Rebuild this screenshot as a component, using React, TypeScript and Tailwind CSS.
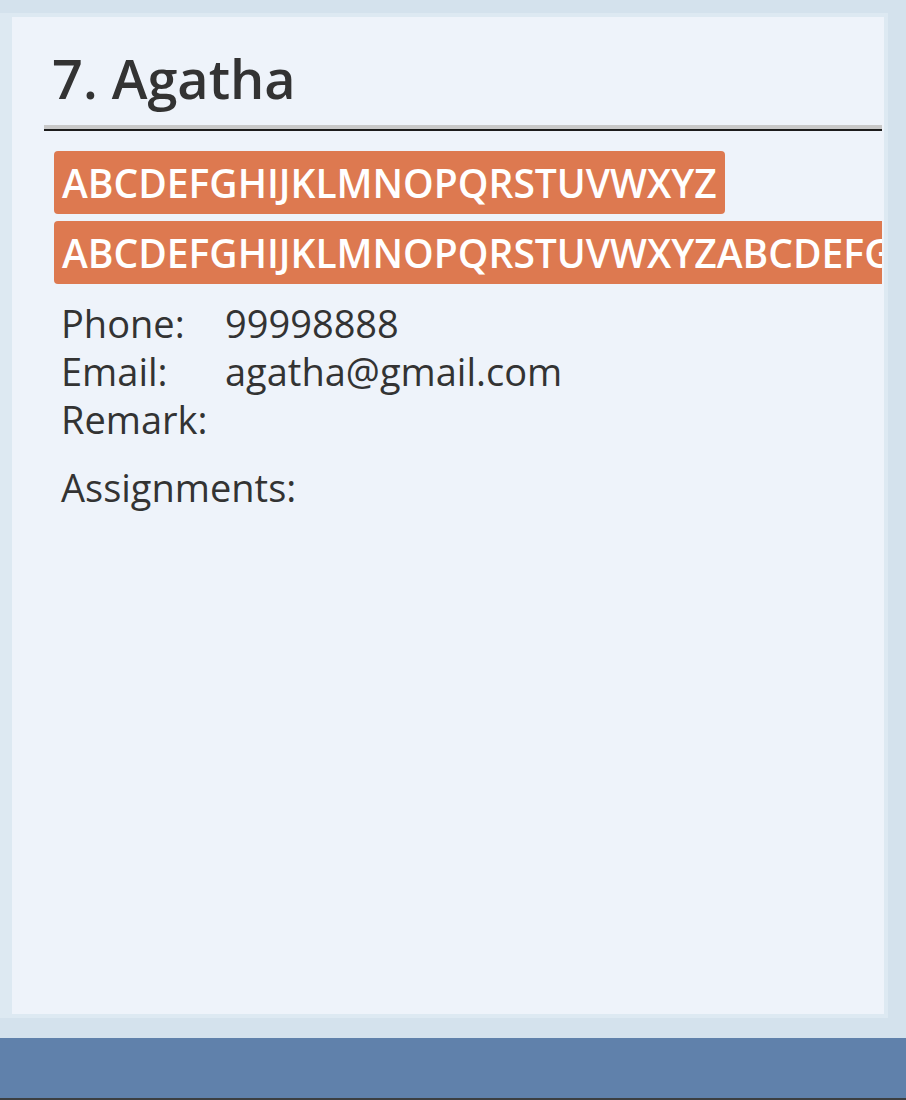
import React from "react";

export default function App() {
  const font = { fontFamily: '"Open Sans", "Noto Sans", sans-serif' };
  return (
    <div className="w-[906px] h-[1100px] bg-[#d4e2ed] flex flex-col overflow-hidden" style={font}>
      <div className="h-[13px] shrink-0" />
      <div className="w-[888px] h-[1005px] shrink-0 bg-[#dde9f2] pl-[12px] pt-[4px] pr-[4px] pb-[4px] flex">
        <div className="flex-1 bg-[#eef3fa] overflow-hidden flex flex-col">
          <div className="pl-[40px] pt-[29px] h-[108px] shrink-0">
            <div className="text-[54px] leading-[64px] font-semibold text-[#333333]">7. Agatha</div>
          </div>
          <div className="ml-[32px] mr-[2px] shrink-0">
            <div className="h-[4px] bg-[#c8c8c8]" />
            <div className="h-[2px] bg-[#1c1c1c]" />
          </div>
          <div className="ml-[42px] mr-[2px] mt-[20px] overflow-hidden flex flex-col items-start gap-[7px]">
            <div className="h-[63px] rounded-[4px] bg-[#dd7950] text-white text-[39px] font-semibold leading-[63px] px-[8px] whitespace-nowrap">
              ABCDEFGHIJKLMNOPQRSTUVWXYZ
            </div>
            <div className="h-[63px] rounded-[4px] bg-[#dd7950] text-white text-[39px] font-semibold leading-[63px] px-[8px] whitespace-nowrap">
              ABCDEFGHIJKLMNOPQRSTUVWXYZABCDEFGHIJKLMNOPQRSTUVWXYZ
            </div>
          </div>
          <div className="ml-[49px] mt-[15px] text-[38px] leading-[48px] text-[#333333]">
            <div className="flex">
              <span className="w-[164px]">Phone:</span>
              <span>99998888</span>
            </div>
            <div className="flex">
              <span className="w-[164px]">Email:</span>
              <span>agatha@gmail.com</span>
            </div>
            <div className="flex">
              <span className="w-[164px]">Remark:</span>
              <span></span>
            </div>
            <div className="mt-[20px]">Assignments:</div>
          </div>
        </div>
      </div>
      <div className="h-[20px] shrink-0" />
      <div className="h-[60px] shrink-0 bg-[#6081ab]" />
      <div className="h-[2px] shrink-0 bg-[#3c3f41]" />
    </div>
  );
}
